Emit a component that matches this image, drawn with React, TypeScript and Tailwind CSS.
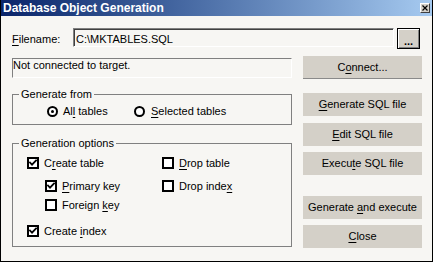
import React from "react";

function Mn({ t, u }: { t: string; u: number }) {
  return (
    <>
      {t.slice(0, u)}
      <span className="underline underline-offset-[2px] decoration-1">{t[u]}</span>
      {t.slice(u + 1)}
    </>
  );
}

function Check({ on }: { on: boolean }) {
  return (
    <span className="w-[12px] h-[12px] border-2 border-black bg-white flex items-center justify-center shrink-0">
      {on && (
        <svg width="8" height="8" viewBox="0 0 8 8">
          <path d="M1 3.6 L3 5.6 L7 1.4" stroke="black" strokeWidth="1.8" fill="none" strokeLinecap="square" />
        </svg>
      )}
    </span>
  );
}

function Radio({ on }: { on: boolean }) {
  return (
    <span className="w-[11px] h-[11px] rounded-full border-2 border-black bg-white flex items-center justify-center shrink-0">
      {on && <span className="w-[3px] h-[3px] rounded-full bg-black" />}
    </span>
  );
}

function Btn({ t, u, cls = "" }: { t: string; u: number; cls?: string }) {
  return (
    <div className={"h-[23px] w-full bg-[#d4d0c8] flex items-center justify-center " + cls}>
      <span>
        <Mn t={t} u={u} />
      </span>
    </div>
  );
}

function CheckRow({ on, t, u }: { on: boolean; t: string; u: number }) {
  return (
    <div className="flex items-center gap-[5px] h-[16px]">
      <Check on={on} />
      <span>
        <Mn t={t} u={u} />
      </span>
    </div>
  );
}

export default function App() {
  return (
    <div className="w-[433px] h-[262px] bg-[#f7f6f3] border-x border-b border-black flex flex-col font-['Liberation_Sans',Arial,sans-serif] text-[11px] leading-[13px] text-black overflow-hidden">
      <div className="h-[16px] shrink-0 bg-gradient-to-r from-[#0a246a] to-[#a6caf0] flex items-center justify-between pl-[2px] pr-[2px]">
        <span className="text-white font-bold text-[12px] leading-[16px]">Database Object Generation</span>
        <span className="w-[10px] h-[10px] bg-[#d4d0c8] border border-t-white border-l-white border-r-[#404040] border-b-[#404040] flex items-center justify-center">
          <svg width="6" height="6" viewBox="0 0 6 6">
            <path d="M0.5 0.5 L5.5 5.5 M5.5 0.5 L0.5 5.5" stroke="black" strokeWidth="1.2" />
          </svg>
        </span>
      </div>

      <div className="flex flex-col pl-[11px] pr-[10px]">
        <div className="flex items-start mt-[12px] h-[21px]">
          <span className="w-[61px] pt-[5px]">
            <Mn t="Filename:" u={0} />
          </span>
          <div className="w-[321px] h-[19px] border border-t-[#808080] border-l-[#808080] border-b-white border-r-white shadow-[inset_1px_1px_0_#404040] pt-[4px] pl-[2px]">
            C:\MKTABLES.SQL
          </div>
          <div className="ml-[3px] w-[23px] h-[21px] border border-black bg-[#d4d0c8] shadow-[inset_1px_1px_0_#fff,inset_-1px_-1px_0_#808080] flex items-end justify-center pb-[3px] font-bold leading-[8px]">
            ...
          </div>
        </div>

        <div className="flex items-start mt-[7px]">
          <div className="w-[280px] h-[20px] mt-[2px] border border-t-[#808080] border-l-[#808080] border-b-white border-r-white pt-[0px]">
            Not connected to target.
          </div>
          <div className="ml-[11px] w-[119px]">
            <Btn t="Connect..." u={1} cls="border-b border-[#8a8a8a]" />
          </div>
        </div>

        <div className="flex gap-[11px]">
          <div className="w-[280px] flex flex-col">
            <fieldset className="mt-[9px] border border-[#808080] pb-[5px]">
              <legend className="ml-[6px] px-[2px] leading-[13px]">Generate from</legend>
              <div className="flex items-center mt-[3px] h-[15px] pl-[34px]">
                <div className="w-[87px] flex items-center gap-[5px]">
                  <Radio on={true} />
                  <span>
                    <Mn t="All tables" u={2} />
                  </span>
                </div>
                <div className="flex items-center gap-[6px]">
                  <Radio on={false} />
                  <span>
                    <Mn t="Selected tables" u={0} />
                  </span>
                </div>
              </div>
            </fieldset>

            <fieldset className="mt-[12px] border border-[#808080] pb-[7px]">
              <legend className="ml-[6px] px-[2px] leading-[13px]">Generation options</legend>
              <div className="flex mt-[5px]">
                <div className="w-[149px] pl-[14px]">
                  <CheckRow on={true} t="Create table" u={1} />
                </div>
                <CheckRow on={false} t="Drop table" u={0} />
              </div>
              <div className="flex mt-[7px]">
                <div className="w-[149px] pl-[32px]">
                  <CheckRow on={true} t="Primary key" u={0} />
                </div>
                <CheckRow on={false} t="Drop index" u={9} />
              </div>
              <div className="flex mt-[3px]">
                <div className="w-[149px] pl-[32px]">
                  <CheckRow on={false} t="Foreign key" u={8} />
                </div>
              </div>
              <div className="flex mt-[10px]">
                <div className="w-[149px] pl-[14px]">
                  <CheckRow on={true} t="Create index" u={7} />
                </div>
              </div>
            </fieldset>
          </div>

          <div className="w-[119px] flex flex-col pt-[14px]">
            <Btn t="Generate SQL file" u={0} />
            <Btn t="Edit SQL file" u={0} cls="mt-[7px]" />
            <Btn t="Execute SQL file" u={5} cls="mt-[6px]" />
            <Btn t="Generate and execute" u={9} cls="mt-[21px]" />
            <Btn t="Close" u={0} cls="mt-[6px]" />
          </div>
        </div>
      </div>
    </div>
  );
}
